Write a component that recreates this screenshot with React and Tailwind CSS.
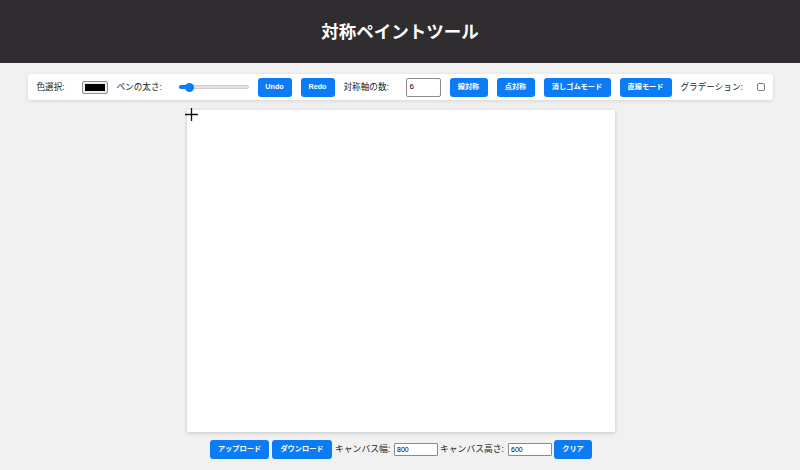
// App.jsx — 対称ペイントツール

const btn =
  "h-[19px] shrink-0 rounded-[3px] bg-[#0b7cf6] text-white text-[7.2px] font-bold flex items-center justify-center";

function Label({ w, children }) {
  return (
    <span className={`${w} shrink-0 text-[8.6px] text-[#222] whitespace-nowrap leading-none`}>
      {children}
    </span>
  );
}

function Slider() {
  return (
    <div className="relative w-[70px] h-[10px] shrink-0 flex items-center">
      <div className="w-full h-[4px] rounded-full bg-[#e3e3e3] border border-[#cfcfcf]" />
      <div className="absolute left-0 top-[3px] w-[11px] h-[4px] rounded-l-full bg-[#0b7cf6]" />
      <div className="absolute left-[6px] top-[0.5px] w-[9px] h-[9px] rounded-full bg-[#0b7cf6]" />
    </div>
  );
}

function Toolbar() {
  return (
    <div className="mx-auto mt-[11px] w-[745px] h-[26px] bg-white rounded-[3px] shadow-[0_1px_4px_rgba(0,0,0,0.12)] flex items-center gap-[9px] pl-[9px] pr-[8px]">
      <Label w="w-[36px]">色選択:</Label>
      <div className="w-[26px] h-[13px] shrink-0 rounded-[2px] border border-[#8f8f8f] bg-[#efefef] p-[2px]">
        <div className="w-full h-full bg-black" />
      </div>
      <Label w="w-[53px]">ペンの太さ:</Label>
      <Slider />
      <div className={`${btn} w-[34px]`}>Undo</div>
      <div className={`${btn} w-[34px]`}>Redo</div>
      <Label w="w-[53px]">対称軸の数:</Label>
      <div className="w-[35px] h-[19px] shrink-0 rounded-[2px] border border-[#8a8a8a] bg-white flex items-center pl-[3px] text-[8px] text-black">
        6
      </div>
      <div className={`${btn} w-[38px]`}>線対称</div>
      <div className={`${btn} w-[38px]`}>点対称</div>
      <div className={`${btn} w-[67px]`}>消しゴムモード</div>
      <div className={`${btn} w-[52px]`}>直線モード</div>
      <Label w="w-[67px]">グラデーション:</Label>
      <div className="w-[8px] h-[8px] shrink-0 rounded-[2px] border border-[#767676] bg-white" />
    </div>
  );
}

function SmallInput({ value }) {
  return (
    <div className="w-[44px] h-[13px] shrink-0 rounded-[1px] border border-[#8a8a8a] bg-white flex items-center pl-[2px] text-[7px] text-black leading-none">
      {value}
    </div>
  );
}

export default function App() {
  return (
    <div
      className="w-[800px] h-[470px] bg-[#f2f1f2] overflow-hidden"
      style={{ fontFamily: '"Liberation Sans", "Noto Sans CJK JP", sans-serif' }}
    >
      <header className="h-[63px] bg-[#2f2d30] flex items-center justify-center pt-[3px]">
        <h1 className="text-white text-[17.5px] font-bold leading-none">対称ペイントツール</h1>
      </header>

      <Toolbar />

      <div className="relative mx-auto mt-[10px] w-[428px] h-[322px] bg-white shadow-[0_1px_4px_rgba(0,0,0,0.18)] translate-x-[1px]">
        <svg className="absolute left-[-2px] top-[-2px]" width="14" height="14" viewBox="0 0 14 14">
          <path d="M0 6.5H13M6.5 0V13" stroke="#111" strokeWidth="1.3" />
        </svg>
      </div>

      <div className="mt-[8px] flex justify-center items-center translate-x-[1px]">
        <div className={`${btn} w-[59px]`}>アップロード</div>
        <div className={`${btn} w-[60px] ml-[3px]`}>ダウンロード</div>
        <span className="ml-[3px] w-[56px] shrink-0 text-[8.8px] text-[#222] whitespace-nowrap leading-none">
          キャンバス幅:
        </span>
        <div className="ml-[3px]">
          <SmallInput value="800" />
        </div>
        <span className="ml-[2px] w-[65px] shrink-0 text-[8.8px] text-[#222] whitespace-nowrap leading-none">
          キャンバス高さ:
        </span>
        <div className="ml-[3px]">
          <SmallInput value="600" />
        </div>
        <div className={`${btn} w-[38px] ml-[2px]`}>クリア</div>
      </div>
    </div>
  );
}
